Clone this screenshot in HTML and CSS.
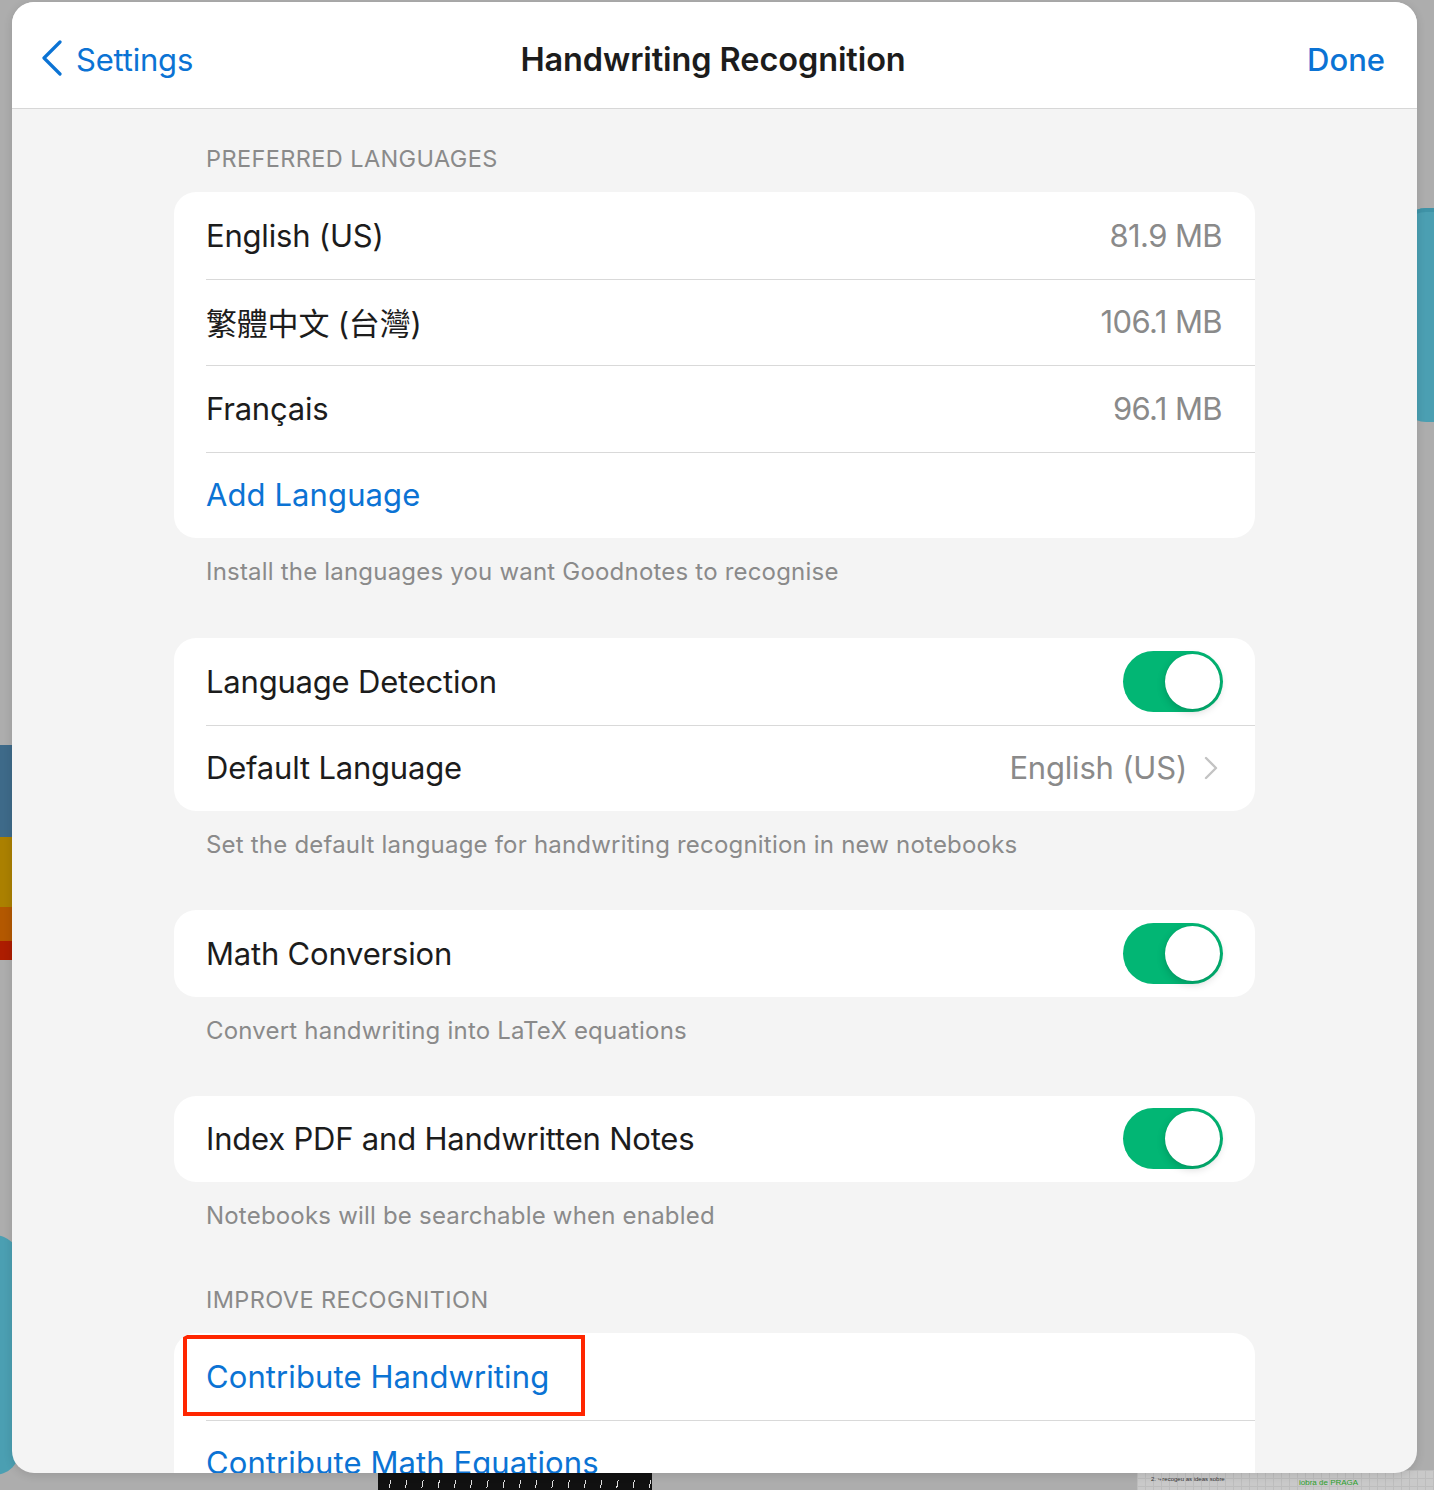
FILE: index.html
```html
<!DOCTYPE html>
<html lang="en">
<head>
  <meta charset="UTF-8">
  <meta name="viewport" content="width=device-width, initial-scale=1">
  <title>Handwriting Recognition</title>
  <link rel="stylesheet" href="styles.css">
</head>
<body>
  <!-- Blurred app behind the sheet -->
  <div class="backdrop">
    <div class="bg-card bg-teal-right"></div>
    <div class="bg-card bg-teal-left"></div>
    <div class="bg-stripes">
      <span class="s-blue"></span>
      <span class="s-yellow"></span>
      <span class="s-orange"></span>
      <span class="s-red"></span>
    </div>
    <div class="bg-black-bar"></div>
    <div class="bg-paper">
      <span class="paper-ink">2. ⤷ recogeu as ideas sobre</span>
      <span class="paper-green">iobra de PRAGA</span>
    </div>
  </div>

  <div class="sheet">
    <header class="nav">
      <a class="nav-back" href="#">
        <svg width="22" height="36" viewBox="0 0 22 36">
          <polyline points="19,2 3,18 19,34" fill="none" stroke="#0b73d4" stroke-width="3.2" stroke-linecap="round" stroke-linejoin="round"/>
        </svg>
        <span>Settings</span>
      </a>
      <h1 class="nav-title">Handwriting Recognition</h1>
      <a class="nav-done" href="#">Done</a>
    </header>

    <main class="content">
      <section class="section first">
        <div class="section-label">PREFERRED LANGUAGES</div>
        <div class="group">
          <div class="row"><span class="row-title">English (US)</span><span class="row-value">81.9 MB</span></div>
          <div class="row"><span class="row-title cjk">繁體中文 (台灣)</span><span class="row-value">106.1 MB</span></div>
          <div class="row"><span class="row-title">Français</span><span class="row-value">96.1 MB</span></div>
          <div class="row"><a class="row-link" href="#">Add Language</a></div>
        </div>
        <p class="section-foot">Install the languages you want Goodnotes to recognise</p>
      </section>

      <section class="section">
        <div class="group">
          <div class="row"><span class="row-title">Language Detection</span><span class="toggle on"><span class="knob"></span></span></div>
          <div class="row">
            <span class="row-title">Default Language</span>
            <span class="row-value with-chevron">English (US)
              <svg width="14" height="24" viewBox="0 0 14 24"><polyline points="2,2 12,12 2,22" fill="none" stroke="#c3c3c3" stroke-width="2.4" stroke-linecap="round" stroke-linejoin="round"/></svg>
            </span>
          </div>
        </div>
        <p class="section-foot">Set the default language for handwriting recognition in new notebooks</p>
      </section>

      <section class="section">
        <div class="group">
          <div class="row"><span class="row-title">Math Conversion</span><span class="toggle on"><span class="knob"></span></span></div>
        </div>
        <p class="section-foot">Convert handwriting into LaTeX equations</p>
      </section>

      <section class="section">
        <div class="group">
          <div class="row"><span class="row-title">Index PDF and Handwritten Notes</span><span class="toggle on"><span class="knob"></span></span></div>
        </div>
        <p class="section-foot">Notebooks will be searchable when enabled</p>
      </section>

      <section class="section labelled">
        <div class="section-label">IMPROVE RECOGNITION</div>
        <div class="group">
          <div class="row highlighted"><a class="row-link" href="#">Contribute Handwriting</a></div>
          <div class="row"><a class="row-link" href="#">Contribute Math Equations</a></div>
        </div>
      </section>
    </main>
  </div>
</body>
</html>
```

FILE: styles.css
```css
/* Reset */
* {
  margin: 0;
  padding: 0;
  box-sizing: border-box;
}

body {
  font-family: Inter, "Noto Sans", Arial, sans-serif;
  background: #adadad;
  width: 1434px;
  height: 1490px;
  overflow: hidden;
  position: relative;
}

a {
  text-decoration: none;
}

/* Background app (dimmed, behind the sheet) */
.backdrop {
  position: absolute;
  inset: 0;
}

.bg-card {
  position: absolute;
  background: #4b9fb2;
  border-radius: 26px;
}

.bg-teal-right {
  left: 1400px;
  top: 208px;
  width: 80px;
  height: 214px;
  box-shadow: inset 0 4px 0 #3f93a7;
}

.bg-teal-left {
  left: -60px;
  top: 1235px;
  width: 80px;
  height: 240px;
}

.bg-stripes {
  position: absolute;
  left: 0;
  top: 745px;
  width: 14px;
  display: flex;
  flex-direction: column;
}

.bg-stripes span {
  display: block;
}

.s-blue { height: 92px; background: #3e6a89; }
.s-yellow { height: 70px; background: #ab8000; }
.s-orange { height: 34px; background: #b35800; }
.s-red { height: 19px; background: #ad1d00; }

.bg-black-bar {
  position: absolute;
  left: 378px;
  top: 1470px;
  width: 274px;
  height: 20px;
  background: #111;
  background-image: repeating-linear-gradient(100deg, transparent 0 12px, #ddd 12px 13px, transparent 13px 16px);
  background-size: 100% 8px;
  background-position: 0 10px;
  background-repeat: no-repeat;
}

.bg-paper {
  position: absolute;
  left: 1137px;
  top: 1470px;
  width: 297px;
  height: 20px;
  background-color: #c9c9c9;
  background-image:
    linear-gradient(#bdbdbd 1px, transparent 1px),
    linear-gradient(90deg, #bdbdbd 1px, transparent 1px);
  background-size: 8px 8px;
  font-family: "Liberation Sans", sans-serif;
  font-size: 6px;
}

.paper-ink {
  position: absolute;
  left: 14px;
  top: 6px;
  color: #333;
}

.paper-green {
  position: absolute;
  left: 162px;
  top: 8px;
  font-size: 8px;
  color: #2aa02a;
}

/* Sheet */
.sheet {
  position: relative;
  margin: 2px 0 0 12px;
  width: 1405px;
  height: 1471px;
  background: #f4f4f4;
  border-radius: 22px;
  overflow: hidden;
  box-shadow: 0 2px 10px rgba(0, 0, 0, 0.12);
}

/* Navigation bar */
.nav {
  height: 107px;
  background: #fff;
  border-bottom: 1px solid #d7d7d7;
  display: grid;
  grid-template-columns: 1fr auto 1fr;
  align-items: center;
  padding: 9px 32px 0 29px;
}

.nav-back {
  display: flex;
  align-items: center;
  gap: 13px;
  color: #0b73d4;
  font-size: 31px;
  letter-spacing: -0.2px;
}

.nav-back svg {
  margin-top: -3px;
}

.nav-title {
  font-size: 32.5px;
  font-weight: 600;
  color: #1c1c1c;
  letter-spacing: -0.1px;
}

.nav-done {
  justify-self: end;
  color: #0b73d4;
  font-size: 31px;
  font-weight: 500;
}

/* Content */
.content {
  width: 1081px;
  margin: 0 auto;
}

.section {
  margin-top: 50px;
}

.section.first {
  margin-top: 35px;
}

.section.first + .section {
  margin-top: 51px;
}

.section.labelled {
  margin-top: 54px;
}

.section-label {
  font-size: 23.5px;
  line-height: 30px;
  color: #8a8a8a;
  padding-left: 32px;
  margin-bottom: 18px;
  letter-spacing: 0.4px;
}

.section-foot {
  font-size: 24px;
  line-height: 30px;
  color: #8a8a8a;
  padding: 19px 0 0 32px;
  letter-spacing: 0.2px;
}

.group {
  background: #fff;
  border-radius: 22px;
  overflow: hidden;
}

.row {
  position: relative;
  height: 86.5px;
  display: flex;
  align-items: center;
  justify-content: space-between;
  padding: 0 32px;
  font-size: 31px;
  color: #1c1c1c;
}

.row + .row::before {
  content: "";
  position: absolute;
  top: 0;
  left: 32px;
  right: 0;
  border-top: 1px solid #d9d9d9;
}

.row-title {
  letter-spacing: -0.2px;
}

.cjk {
  font-family: Inter, "Noto Sans CJK TC", sans-serif;
}

.row-value {
  color: #8a8a8a;
  padding-right: 1px;
  letter-spacing: -0.6px;
}

.with-chevron {
  display: flex;
  align-items: center;
  gap: 17px;
  letter-spacing: -0.2px;
  padding-right: 5px;
}

.row-link {
  color: #0b73d4;
  letter-spacing: 0.1px;
}

/* Red highlight drawn over the first row */
.highlighted::after {
  content: "";
  position: absolute;
  left: 9px;
  top: 2px;
  width: 402px;
  height: 81px;
  box-sizing: border-box;
  border: 4px solid #ff2600;
}

/* Toggle */
.toggle {
  position: relative;
  width: 100px;
  height: 61px;
  border-radius: 31px;
  background: #e5e5e5;
}

.toggle.on {
  background: #02b674;
}

.knob {
  position: absolute;
  top: 3px;
  left: 3px;
  width: 55px;
  height: 55px;
  border-radius: 50%;
  background: #fff;
  box-shadow: 0 3px 8px rgba(0, 0, 0, 0.18), 0 0 1px rgba(0, 0, 0, 0.1);
}

.toggle.on .knob {
  left: 42px;
}
```
